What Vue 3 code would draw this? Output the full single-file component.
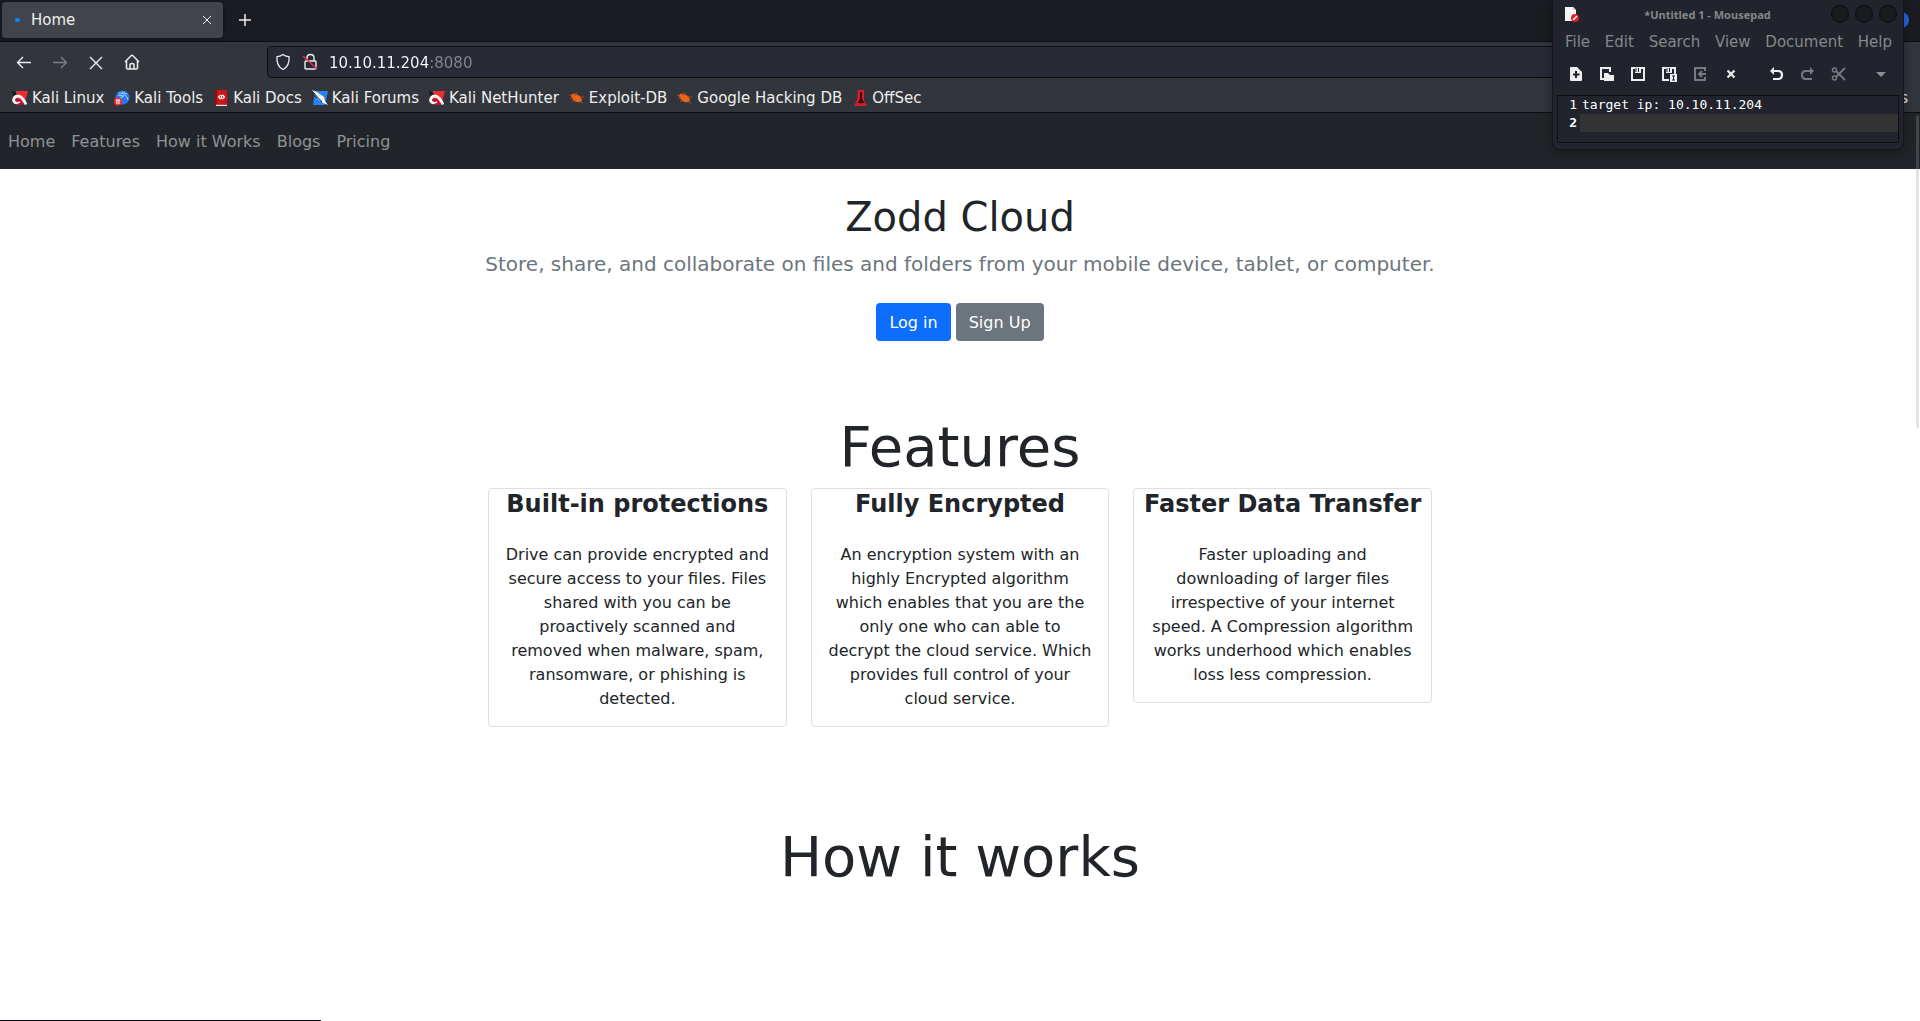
<script setup>
import { ref } from 'vue'

const address = ref('10.10.11.204:8080')
const note = ref('target ip: 10.10.11.204\n')

const bookmarks = [
  { label: 'Kali Linux', icon: 'dragon' },
  { label: 'Kali Tools', icon: 'tools' },
  { label: 'Kali Docs', icon: 'docs' },
  { label: 'Kali Forums', icon: 'forums' },
  { label: 'Kali NetHunter', icon: 'dragon' },
  { label: 'Exploit-DB', icon: 'bug' },
  { label: 'Google Hacking DB', icon: 'bug' },
  { label: 'OffSec', icon: 'offsec' },
]

const links = ['Home', 'Features', 'How it Works', 'Blogs', 'Pricing']

const features = [
  {
    title: 'Built-in protections',
    text: 'Drive can provide encrypted and secure access to your files. Files shared with you can be proactively scanned and removed when malware, spam, ransomware, or phishing is detected.',
  },
  {
    title: 'Fully Encrypted',
    text: 'An encryption system with an highly Encrypted algorithm which enables that you are the only one who can able to decrypt the cloud service. Which provides full control of your cloud service.',
  },
  {
    title: 'Faster Data Transfer',
    text: 'Faster uploading and downloading of larger files irrespective of your internet speed. A Compression algorithm works underhood which enables loss less compression.',
  },
]

const menus = ['File', 'Edit', 'Search', 'View', 'Document', 'Help']
</script>

<template>
  <div class="screen">
    <header class="chrome">
      <div class="tabs">
        <div class="tab">
          <span class="loading"></span>
          <span class="tab-title">Home</span>
          <button class="icon-btn" aria-label="Close tab">
            <svg width="10" height="10" viewBox="0 0 10 10"><path d="M1 1l8 8M9 1L1 9" /></svg>
          </button>
        </div>
        <button class="icon-btn new-tab" aria-label="New tab">
          <svg width="12" height="12" viewBox="0 0 12 12"><path d="M6 0v12M0 6h12" stroke-width="1.5" /></svg>
        </button>
        <span class="account"></span>
      </div>

      <div class="toolbar">
        <div class="nav-buttons">
          <button class="icon-btn" aria-label="Back">
            <svg width="16" height="16" viewBox="0 0 16 16"><path d="M15 8.500H1.500M7 3L1.500 8.500 7 14" stroke-width="1.400" /></svg>
          </button>
          <button class="icon-btn dim" aria-label="Forward" disabled>
            <svg width="16" height="16" viewBox="0 0 16 16"><path d="M1 8.500h13.500M9 3l5.500 5.500L9 14" stroke-width="1.400" /></svg>
          </button>
          <button class="icon-btn" aria-label="Stop">
            <svg width="16" height="16" viewBox="0 0 16 16"><path d="M2 3l12 12M14 3L2 15" stroke-width="1.400" /></svg>
          </button>
          <button class="icon-btn" aria-label="Home page">
            <svg width="16" height="16" viewBox="0 0 16 16"><path d="M1 8l6.300-6.500q.7-.6 1.400 0L15 8M2.500 7v7q0 1 1 1h9q1 0 1-1V7M6 15v-4q0-1.500 2-1.500t2 1.500v4" stroke-width="1.500" /></svg>
          </button>
        </div>
        <div class="address">
          <svg width="16" height="18" viewBox="0 0 16 18"><path d="M8 1.500q3 2 6 2.200c.5 6-1.500 10.500-6 12.800C3.500 14.200 1.500 9.700 2 3.700Q5 3.500 8 1.500z" stroke-width="1.300" /></svg>
          <svg width="16" height="18" viewBox="0 0 16 18">
            <path d="M5 8V5q0-3.500 3.500-3.500T12 5v3M3 9q0-1 1-1h9q1 0 1 1v6q0 1-1 1H4q-1 0-1-1z" stroke-width="1.400" />
            <path d="M1 3l14 13" stroke="#e22850" stroke-width="1.600" />
          </svg>
          <input v-model="address" class="url" type="text" aria-label="Address" />
        </div>
      </div>

      <div class="bookmarks">
        <a v-for="b in bookmarks" :key="b.label" href="#" class="bookmark">
          <svg v-if="b.icon === 'dragon'" width="16" height="16" viewBox="0 0 16 16" class="art">
            <path d="M4 1h12l-3 11-3 2-6-6z" fill="#ef2b36" />
            <path d="M0 1l3 1 3 3-3 2-2-2z" fill="#17181c" />
            <path d="M3 9l5 0 4 6H4z" fill="#b51432" />
            <path d="M4.500 13Q.5 12 2 8.500 4 5 8 6.500q3 1.500 6 8" stroke="#f7f7f7" stroke-width="2.800" />
            <path d="M4 13.500l4-1.500" stroke="#f7f7f7" stroke-width="1.600" />
          </svg>
          <svg v-else-if="b.icon === 'tools'" width="16" height="16" viewBox="0 0 16 16" class="art">
            <circle cx="8.500" cy="7.500" r="7" fill="#2877ef" />
            <path d="M5 3q7 0 9 7M4 5l6 1-4 2M8 2l5 2" stroke="#a8cfff" stroke-width="1" />
            <circle cx="4" cy="11.500" r="4" fill="#ec3038" />
            <path d="M1.800 10h4.400M3 10v4M5 10v4" stroke="#fff" stroke-width="1" />
          </svg>
          <svg v-else-if="b.icon === 'docs'" width="16" height="16" viewBox="0 0 16 16" class="art">
            <path d="M2 0h12v16H3l-1-2z" fill="#d01219" />
            <path d="M2 0h2v14H2z" fill="#9c0c14" />
            <path d="M3 14.800h11V16H3z" fill="#eee" />
            <path d="M7.500 5L5.500 7l2 2M7.500 9q1 0 1-2t1-2M9.500 5l2 2-2 2" stroke="#fff" stroke-width="1.200" />
          </svg>
          <svg v-else-if="b.icon === 'forums'" width="16" height="16" viewBox="0 0 16 16" class="art">
            <path d="M3 1h13l-3 14H1z" fill="#2583f5" />
            <path d="M0 0l5 2 7 5 1 4 3 4-5-2-5-4z" fill="#f5f5f0" />
            <path d="M0 1l10 11M1 5l4 3" stroke="#202532" stroke-width="1" />
          </svg>
          <svg v-else-if="b.icon === 'bug'" width="16" height="16" viewBox="0 0 16 16" class="art">
            <path d="M2 6q0-3 4-2 6 1 7 6l-1 2Q7 13 4 10z" fill="#f06414" />
            <path d="M1 8h4M0 5l4 1M8 6l-1-4M10 7h5M3 12l4-3M10 11l4 2M5 3l1 3" stroke="#b55222" stroke-width=".8" />
          </svg>
          <svg v-else width="16" height="16" viewBox="0 0 16 16" class="art">
            <path d="M6 0h6v10l3 6H2l3-6z" fill="#d91d25" />
            <path d="M8 2h2v6l1 3 2 2H9l-.5 2L8 13H5l2-2 1-3z" fill="#340a10" />
          </svg>
          <span>{{ b.label }}</span>
        </a>
        <a href="#" class="bookmark other">Other Bookmarks</a>
      </div>
    </header>

    <div class="page">
      <nav class="site-nav">
        <a v-for="l in links" :key="l" href="#">{{ l }}</a>
      </nav>
      <span class="thumb"></span>

      <main>
        <section class="hero">
          <h1>Zodd Cloud</h1>
          <p>Store, share, and collaborate on files and folders from your mobile device, tablet, or computer.</p>
          <div class="actions">
            <button class="btn primary">Log in</button>
            <button class="btn secondary">Sign Up</button>
          </div>
        </section>

        <section class="features">
          <h2>Features</h2>
          <div class="cards">
            <article v-for="f in features" :key="f.title" class="card">
              <h3>{{ f.title }}</h3>
              <p>{{ f.text }}</p>
            </article>
          </div>
        </section>

        <section class="how">
          <h2>How it works</h2>
        </section>
      </main>
    </div>

    <div class="status"></div>

    <aside class="window">
      <div class="titlebar">
        <svg width="16" height="16" viewBox="0 0 16 16" class="art">
          <path d="M1 1h8l3 3v11H1z" fill="#f5f5f5" />
          <path d="M9 1v3h3" fill="#ccc" />
          <circle cx="11" cy="12" r="4" fill="#dc1f26" />
          <path d="M9 14l4-4" stroke="#fff" stroke-width="1.500" />
        </svg>
        <span class="window-title">*Untitled 1 - Mousepad</span>
        <div class="controls">
          <button aria-label="Minimize"></button>
          <button aria-label="Maximize"></button>
          <button aria-label="Close"></button>
        </div>
      </div>
      <div class="menubar">
        <button v-for="m in menus" :key="m">{{ m }}</button>
      </div>
      <div class="tools">
        <button aria-label="New">
          <svg width="16" height="16" viewBox="0 0 16 16"><path fill="#eee" fill-rule="evenodd" d="M3 1h6l5 5v8q0 1-1 1H3q-1 0-1-1V2q0-1 1-1zM7 5v2.500H5v2h2V12h2V9.500h2.500v-2H9V5z" /></svg>
        </button>
        <button aria-label="Open">
          <svg width="16" height="16" viewBox="0 0 16 16"><path d="M5 13H2V2h9v4" stroke="#eee" stroke-width="2" /><path d="M5 7h4l2 2h4v6H5z" fill="#eee" /></svg>
        </button>
        <button aria-label="Save">
          <svg width="16" height="16" viewBox="0 0 16 16"><path d="M2 2h12v12H2z" stroke="#eee" stroke-width="2" /><path d="M5 2h6v5H5z" fill="#eee" /><path d="M8.500 2v4M6 2v4" stroke="#21242d" /></svg>
        </button>
        <button aria-label="Save as">
          <svg width="16" height="16" viewBox="0 0 16 16"><path d="M8 14H2V2h12v6" stroke="#eee" stroke-width="2" /><path d="M5 2h6v5H5zM9 8h7v8H9z" fill="#eee" /><path d="M8.500 2v4M6 2v4M11 10h3M12.500 10v4M11 14h3" stroke="#21242d" /></svg>
        </button>
        <button aria-label="Revert" disabled>
          <svg width="16" height="16" viewBox="0 0 16 16"><path d="M13 5V2H3v12h10v-3" stroke="#777a7f" stroke-width="2" /><path d="M14 8H7M10 5L7 8l3 3" stroke="#777a7f" stroke-width="2" /></svg>
        </button>
        <button aria-label="Close file">
          <svg width="16" height="16" viewBox="0 0 16 16"><path d="M4.500 4.500l7 7M11.500 4.500l-7 7" stroke="#eee" stroke-width="2.200" /></svg>
        </button>
        <span class="split"></span>
        <button aria-label="Undo">
          <svg width="16" height="16" viewBox="0 0 16 16"><path d="M3 5h6q4 0 4 4t-4 4H4" stroke="#eee" stroke-width="2.200" /><path d="M5 1v8L1 5z" fill="#eee" /></svg>
        </button>
        <button aria-label="Redo" disabled>
          <svg width="16" height="16" viewBox="0 0 16 16"><path d="M12 5H6Q2 5 2 9t4 4h6" stroke="#777a7f" stroke-width="2" /><path d="M10 1v8l4-4z" fill="#777a7f" /></svg>
        </button>
        <button aria-label="Cut" disabled>
          <svg width="16" height="16" viewBox="0 0 16 16"><path d="M14 2L5 11M14 14L5 5" stroke="#777a7f" stroke-width="1.800" /><circle cx="3.500" cy="4" r="2" stroke="#777a7f" stroke-width="1.500" /><circle cx="3.500" cy="12" r="2" stroke="#777a7f" stroke-width="1.500" /></svg>
        </button>
        <button class="more" aria-label="More tools">
          <svg width="16" height="16" viewBox="0 0 16 16"><path d="M3 6h10l-5 5z" fill="#8b8d91" /></svg>
        </button>
      </div>
      <div class="editor">
        <div class="gutter"><span>1</span><b>2</b></div>
        <textarea v-model="note" rows="2" aria-label="Document text" spellcheck="false"></textarea>
      </div>
    </aside>
  </div>
</template>

<style>
body {
  margin: 0;
}
</style>

<style scoped>
* {
  box-sizing: border-box;
}

.screen {
  position: relative;
  display: flex;
  flex-direction: column;
  min-height: 100vh;
  overflow: hidden;
  background: #fff;
  font-family: "DejaVu Sans", sans-serif;
  color: #212529;
}

button,
input,
textarea {
  margin: 0;
  padding: 0;
  border: 0;
  background: none;
  font-family: inherit;
}

svg {
  display: block;
  flex: none;
  fill: none;
}

a {
  text-decoration: none;
}

/* browser chrome */
.chrome {
  background: #33353d;
  border-bottom: 1px solid #0c0d10;
  color: #eeeeec;
  font-size: 15px;
}

.chrome svg:not(.art) {
  stroke: #eeeeec;
}

.tabs {
  display: flex;
  align-items: center;
  height: 42px;
  padding: 0 11px 2px 2px;
  background: #1b1c21;
  border-bottom: 1px solid #0c0d10;
}

.tab {
  display: flex;
  align-items: center;
  width: 221px;
  height: 36px;
  padding: 0 11px 0 13px;
  border-radius: 4px;
  background: #42444c;
  box-shadow: 0 0 3px #0c0d10;
}

.loading {
  width: 5px;
  height: 4px;
  margin-right: 11px;
  border-radius: 2px;
  background: #0a84ff;
}

.tab-title {
  flex: 1;
}

.icon-btn {
  display: grid;
  place-items: center;
}

.dim {
  opacity: 0.4;
}

.new-tab {
  margin-left: 16px;
}

.account {
  width: 16px;
  height: 16px;
  margin-left: auto;
  border-radius: 8px;
  background: #2268e4;
}

.toolbar {
  display: flex;
  align-items: center;
  height: 40px;
  padding: 0 200px 0 16px;
}

.nav-buttons {
  display: flex;
  gap: 20px;
  width: 251px;
}

.address {
  display: flex;
  flex: 1;
  align-items: center;
  height: 32px;
  padding-left: 7px;
  gap: 11px;
  border: 1px solid #0c0d10;
  border-radius: 4px;
  background: #282a36;
}

.url {
  flex: 1;
  height: 26px;
  padding-top: 2px;
  background: linear-gradient(to right, #fbfbfe 101px, #85868f 101px);
  background-clip: text;
  color: transparent;
  font-size: 15px;
  outline: 0;
}

.bookmarks {
  display: flex;
  align-items: center;
  gap: 10px;
  height: 30px;
  padding: 1px 12px 0;
}

.bookmark {
  display: flex;
  align-items: center;
  gap: 4px;
  color: #eeeeec;
  line-height: 20px;
  white-space: nowrap;
}

.other {
  margin-left: auto;
}

/* web page */
.page {
  position: relative;
}

.site-nav {
  display: flex;
  gap: 16px;
  padding: 17px 8px 15px;
  background: #212529;
  font-size: 16px;
  line-height: 24px;
}

.site-nav a {
  color: #909294;
}

.thumb {
  position: absolute;
  top: 2px;
  right: 1px;
  width: 3px;
  height: 313px;
  border-radius: 2px;
  background: rgba(150, 155, 155, 0.28);
}

main {
  max-width: 960px;
  margin: 0 auto;
  padding: 24px 8px;
  text-align: center;
}

h1,
h2,
h3,
p {
  margin: 0;
}

h1 {
  font-size: 40px;
  font-weight: 400;
  line-height: 48px;
}

h2 {
  font-size: 56px;
  font-weight: 400;
  line-height: 67px;
}

.hero p {
  margin: 8px -16px 24px;
  color: #6c757d;
  font-size: 20px;
  line-height: 30px;
}

.actions {
  display: flex;
  justify-content: center;
  gap: 5px;
}

.btn {
  padding: 8px 13px 6px;
  border-radius: 4px;
  color: #fff;
  font-size: 16px;
  line-height: 24px;
}

.primary {
  background: #0d6efd;
}

.secondary {
  background: #6c757d;
}

.features {
  margin-top: 72px;
}

.cards {
  display: grid;
  grid-template-columns: repeat(3, 1fr);
  align-items: start;
  gap: 24px;
  margin-top: 8px;
}

.card {
  border: 1px solid #dfdfdf;
  border-radius: 4px;
}

.card h3 {
  font-size: 24px;
  line-height: 30px;
  white-space: nowrap;
}

.card p {
  padding: 24px 16px 15px;
  font-size: 16px;
  line-height: 24px;
}

.how {
  margin-top: 96px;
}

.status {
  position: fixed;
  bottom: 0;
  left: 0;
  width: 321px;
  height: 1px;
  background: #0c0d10;
}

/* text editor window */
.window {
  position: absolute;
  top: 0;
  right: 17px;
  width: 350px;
  padding: 0 4px 6px;
  border-radius: 0 0 6px 6px;
  background: #21242d;
  box-shadow: 0 0 0 1px #15171c, 0 3px 12px rgba(0, 0, 0, 0.4);
  color: #85878b;
}

.titlebar {
  display: flex;
  align-items: center;
  height: 28px;
  padding: 0 2px 0 7px;
}

.window-title {
  flex: 1;
  padding-left: 42px;
  font-family: "Noto Sans", sans-serif;
  font-size: 11px;
  font-weight: 700;
  text-align: center;
}

.controls {
  display: flex;
  gap: 6px;
  margin-left: 38px;
}

.controls button {
  width: 18px;
  height: 18px;
  border: 1px solid #0c0d10;
  border-radius: 9px;
  background: #191b1f;
}

.menubar {
  display: flex;
  justify-content: space-between;
  height: 27px;
  padding: 1px 7px 0 8px;
  border-bottom: 1px solid #1d2027;
}

.menubar button {
  color: inherit;
  font-size: 15px;
  line-height: 26px;
}

.tools {
  display: flex;
  align-items: center;
  height: 40px;
  padding: 0 3px 2px;
}

.tools button {
  display: grid;
  place-items: center;
  width: 31px;
  height: 30px;
}

.split {
  width: 1px;
  height: 30px;
  margin: 0 7px;
  background: #1d2027;
}

.tools .more {
  margin-left: auto;
}

.editor {
  display: flex;
  height: 48px;
  border: 1px solid #0c0d10;
  color: #fff;
  font-family: "DejaVu Sans Mono", monospace;
  font-size: 13px;
  line-height: 18px;
}

.gutter {
  display: flex;
  flex-direction: column;
  width: 22px;
  padding-right: 3px;
  text-align: right;
}

textarea {
  flex: 1;
  height: 36px;
  padding-left: 2px;
  background: linear-gradient(#21242d 18px, #333 18px);
  color: inherit;
  font-size: inherit;
  line-height: inherit;
  outline: 0;
  overflow: hidden;
  resize: none;
}
</style>
